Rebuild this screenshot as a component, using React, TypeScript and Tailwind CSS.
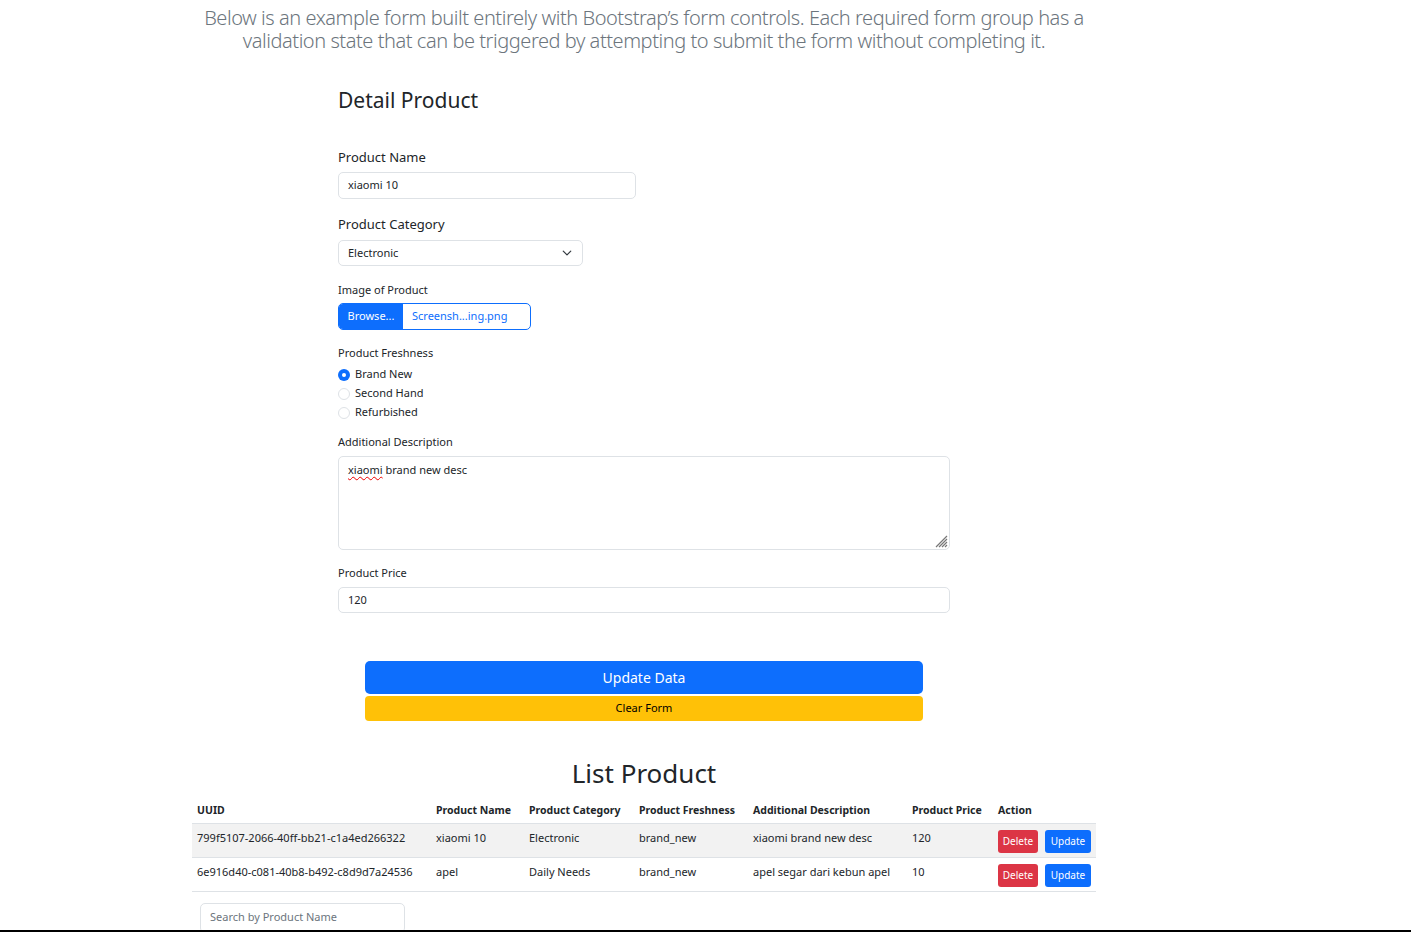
import React from "react";

const font = { fontFamily: '"Noto Sans", "Open Sans", sans-serif' };

function Radio({ checked, label }: { checked?: boolean; label: string }) {
  return (
    <div className="flex items-center h-[19px]">
      {checked ? (
        <div className="w-[12px] h-[12px] rounded-full bg-[#0d6efd] flex items-center justify-center">
          <div className="w-[4px] h-[4px] rounded-full bg-white" />
        </div>
      ) : (
        <div className="w-[12px] h-[12px] rounded-full border border-[#dee2e6] bg-white" />
      )}
      <span className="ml-[5px] text-[11px] text-[#212529]">{label}</span>
    </div>
  );
}

const cols = [
  { h: "UUID", w: "w-[239px]" },
  { h: "Product Name", w: "w-[93px]" },
  { h: "Product Category", w: "w-[110px]" },
  { h: "Product Freshness", w: "w-[114px]" },
  { h: "Additional Description", w: "w-[159px]" },
  { h: "Product Price", w: "w-[86px]" },
  { h: "Action", w: "w-[103px]" },
];

const rows = [
  ["799f5107-2066-40ff-bb21-c1a4ed266322", "xiaomi 10", "Electronic", "brand_new", "xiaomi brand new desc", "120"],
  ["6e916d40-c081-40b8-b492-c8d9d7a24536", "apel", "Daily Needs", "brand_new", "apel segar dari kebun apel", "10"],
];

export default function App() {
  return (
    <div className="w-[1411px] h-[932px] bg-white overflow-hidden flex flex-col text-[#212529]" style={font}>
      <div className="w-[1288px] flex-1 min-h-0 overflow-hidden flex flex-col">
        <div className="w-[904px] mx-auto flex flex-col">
          <p className="mt-[6px] text-center text-[20px] leading-[23px] font-light text-[#6c757d] tracking-[-0.45px]">
            Below is an example form built entirely with Bootstrap’s form controls. Each required form group has a
            validation state that can be triggered by attempting to submit the form without completing it.
          </p>

          <div className="w-[612px] mx-auto flex flex-col">
            <h2 className="mt-[35px] text-[21px] leading-[26px] font-normal">Detail Product</h2>

            <label className="mt-[35px] text-[13px] leading-[18px]">Product Name</label>
            <div className="mt-[6px] w-[298px] h-[27px] border border-[#dee2e6] rounded-[5px] flex items-center px-[9px] text-[11px]">
              xiaomi 10
            </div>

            <label className="mt-[16px] text-[13px] leading-[18px]">Product Category</label>
            <div className="mt-[7px] w-[245px] h-[26px] border border-[#dee2e6] rounded-[5px] flex items-center justify-between px-[9px] text-[11px]">
              <span>Electronic</span>
              <svg width="10" height="10" viewBox="0 0 16 16" className="mr-[1px]">
                <path d="M2 5l6 6 6-6" fill="none" stroke="#343a40" strokeWidth="2" strokeLinecap="round" strokeLinejoin="round" />
              </svg>
            </div>

            <label className="mt-[17px] text-[11px] leading-[14px]">Image of Product</label>
            <div className="mt-[6px] w-[193px] h-[27px] border border-[#0d6efd] rounded-[5px] flex overflow-hidden text-[11px]">
              <div className="w-[64px] bg-[#0d6efd] text-white flex items-center justify-center">Browse...</div>
              <div className="flex-1 flex items-center pl-[9px] text-[#0d6efd]">Screensh...ing.png</div>
            </div>

            <label className="mt-[16px] text-[11px] leading-[14px]">Product Freshness</label>
            <div className="mt-[5px] flex flex-col">
              <Radio checked label="Brand New" />
              <Radio label="Second Hand" />
              <Radio label="Refurbished" />
            </div>

            <label className="mt-[13px] text-[11px] leading-[14px]">Additional Description</label>
            <div className="mt-[7px] relative w-[612px] h-[94px] border border-[#dee2e6] rounded-[5px] px-[9px] pt-[5px] text-[11px]">
              <span className="underline decoration-wavy decoration-[#e00] decoration-1 underline-offset-2">xiaomi</span> brand new desc
              <svg width="13" height="13" viewBox="0 0 13 13" className="absolute right-[1px] bottom-[1px]">
                <path d="M12 1L1 12M12 4L4 12M12 7L7 12M12 10L10 12" stroke="#777" strokeWidth="1.2" />
              </svg>
            </div>

            <label className="mt-[16px] text-[11px] leading-[14px]">Product Price</label>
            <div className="mt-[7px] w-[612px] h-[26px] border border-[#dee2e6] rounded-[5px] flex items-center px-[9px] text-[11px]">
              120
            </div>

            <div className="mt-[48px] w-[558px] mx-auto flex flex-col gap-[2px]">
              <div className="h-[33px] bg-[#0d6efd] rounded-[5px] text-white text-[14px] flex items-center justify-center">Update Data</div>
              <div className="h-[25px] bg-[#ffc107] rounded-[4px] text-black text-[11px] flex items-center justify-center">Clear Form</div>
            </div>
          </div>

          <h2 className="mt-[36px] text-center text-[26px] leading-[32px] font-normal">List Product</h2>

          <table className="mt-[11px] w-[904px] table-fixed border-collapse text-[11px]">
            <thead>
              <tr className="border-b border-[#dee2e6] h-[23px]">
                {cols.map((c) => (
                  <th key={c.h} className={`${c.w} text-left font-bold text-[10.5px] px-[5px] align-middle`}>
                    {c.h}
                  </th>
                ))}
              </tr>
            </thead>
            <tbody>
              {rows.map((r, i) => (
                <tr key={i} className={`h-[34px] border-b border-[#dee2e6] ${i === 0 ? "bg-[#f2f2f2]" : ""}`}>
                  {r.map((c, j) => (
                    <td key={j} className="px-[5px] align-top pt-[6px]">
                      {c}
                    </td>
                  ))}
                  <td className="px-[5px] align-middle">
                    <div className="flex gap-[7px] pt-[3px]">
                      <div className="w-[40px] h-[23px] bg-[#dc3545] text-white rounded-[3px] text-[10px] flex items-center justify-center">Delete</div>
                      <div className="w-[46px] h-[23px] bg-[#0d6efd] text-white rounded-[3px] text-[10px] flex items-center justify-center">Update</div>
                    </div>
                  </td>
                </tr>
              ))}
            </tbody>
          </table>

          <div className="mt-[11px] ml-[8px] w-[205px] h-[30px] shrink-0 border border-[#dee2e6] rounded-[5px] flex items-center px-[9px] text-[11px] text-[#6c757d]">
            Search by Product Name
          </div>
        </div>
      </div>
      <div className="h-[2px] bg-black w-full shrink-0" />
    </div>
  );
}
